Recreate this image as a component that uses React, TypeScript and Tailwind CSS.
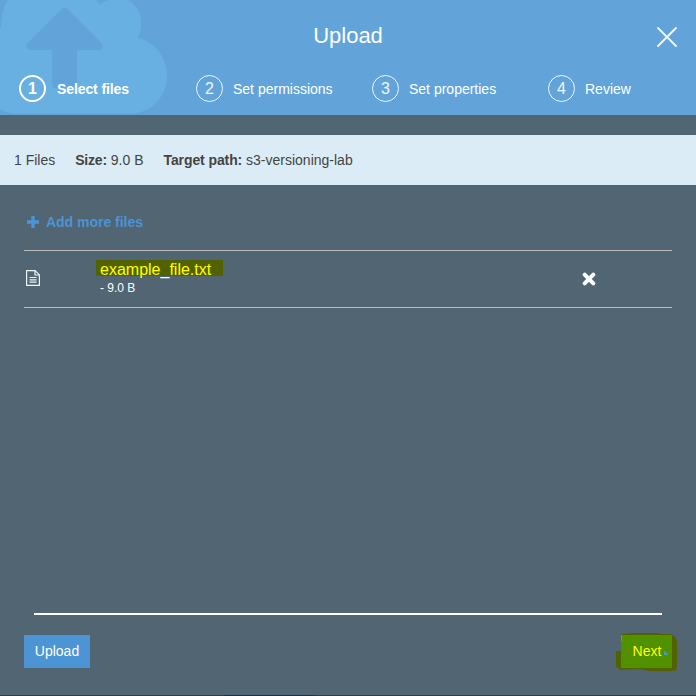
import React from "react";

const steps = ["Select files", "Set permissions", "Set properties", "Review"];

function CloudArt() {
  return (
    <svg className="absolute left-0 top-0" width="200" height="115" viewBox="0 0 200 115" aria-hidden="true">
      <path
        d="M1 28C1 18 3 8 8 0H96.500Q98.500 2 99.500 5C103 2 107 0 110 0H128C137 5 141 14 141 24C141 29 140 34 137.500 38C154 41 167 57 167 76C167 97 151 113.500 131 113.500H17C10 113.500 5 112 0 109V28Z"
        fill="#68b0e2"
      />
      <path
        d="M61.500 9Q64.500 6.500 67.500 9L102 43.500Q104 46 102.500 48Q101.500 50 99 50H77V84Q77 88 73 88H56Q52 88 52 84V50H30Q27.500 50 26.500 48Q25.500 46 27 43.500Z"
        fill="#62a4da"
      />
    </svg>
  );
}

function FileIcon() {
  return (
    <svg width="14" height="16" viewBox="0 0 14 16" fill="none" stroke="#fff" strokeOpacity=".92" strokeWidth="1.2">
      <path d="M.6.6H9.200L13.400 4.800V15.400H.6Z" strokeLinejoin="round" />
      <path d="M9 .8V5H13.200M3.500 7.500H10.500M3.500 9.800H10.500M3.500 12.200H10.500" />
    </svg>
  );
}

export default function App() {
  return (
    <div className="flex h-[696px] w-[696px] flex-col overflow-hidden bg-[#516572] font-['Liberation_Sans',Arial,sans-serif] text-sm text-white">
      <header className="relative h-[115px] shrink-0 bg-[#62a4da]">
        <CloudArt />
        <div className="relative grid h-[75px] grid-cols-[1fr_auto_1fr] items-center">
          <h1 className="col-start-2 pb-1 text-[22px] leading-[26px]">Upload</h1>
          <button className="mb-[2px] mr-[19px] justify-self-end" aria-label="Close">
            <svg className="block" width="20" height="20" viewBox="0 0 20 20" stroke="#fff" strokeOpacity=".92" strokeWidth="1.8" strokeLinecap="round">
              <path d="M1 1L19 19M19 1L1 19" />
            </svg>
          </button>
        </div>
        <ol className="relative flex pl-[19px]">
          {steps.map((step, i) => (
            <li key={step} className={`flex w-44 shrink-0 items-center ${i === 0 ? "mr-px font-bold" : ""}`}>
              <span className={`flex size-[27px] items-center justify-center rounded-full border-white text-base ${i === 0 ? "border-2" : "border border-white/90 text-white/90"}`}>
                {i + 1}
              </span>
              <span className={i === 0 ? "ml-[11px] tracking-[-0.1px]" : "ml-[10px]"}>{step}</span>
            </li>
          ))}
        </ol>
      </header>

      <section className="mt-5 flex h-[50px] shrink-0 items-center gap-5 bg-[#dcecf6] pl-[14px] text-[#444]">
        <span>1 Files</span>
        <span><b className="tracking-[-0.2px]">Size:</b> 9.0 B</span>
        <span><b className="tracking-[-0.1px]">Target path:</b> s3-versioning-lab</span>
      </section>

      <main className="flex flex-1 flex-col px-6 pt-[27px]">
        <button className="ml-[3px] flex h-5 items-center self-start font-bold text-[#4d94d5]">
          <svg className="mb-px mr-[7px]" width="12" height="12" viewBox="0 0 12 12" stroke="currentColor" strokeWidth="3.4">
            <path d="M6 0V12M0 6H12" />
          </svg>
          <span className="tracking-[-0.02px]">Add more files</span>
        </button>
        <div className="mt-[18px] flex h-[58px] border-y border-[#bbb]">
          <div className="flex w-[72px] items-center pb-[2px] pl-0.5"><FileIcon /></div>
          <div className="flex-1 pt-[9px]">
            <div className="flex h-4 w-[127px] items-center bg-[#536200] pl-1 text-base leading-[18px] text-[#ffff00]">
              <span className="pt-1">example<span className="text-white">_</span>file.txt</span>
            </div>
            <div className="pl-1 pt-[5px] text-xs leading-[15px]">- 9.0 B</div>
          </div>
          <button className="mr-[76px] self-center pb-px" aria-label="Remove">
            <svg className="block" width="14" height="14" viewBox="0 0 14 14" stroke="white" strokeWidth="4" strokeLinecap="round">
              <path d="M2.700 2.700L11.300 11.300M11.300 2.700L2.700 11.300" />
            </svg>
          </button>
        </div>
        <footer className="mt-auto">
          <div className="mx-[10px] h-0.5 bg-white" />
          <div className="mt-[17px] flex h-[63px] justify-between">
            <button className="mt-[3px] h-[33px] w-[66px] bg-[#4d94d5] pb-[2px]">Upload</button>
            <button className="relative -mr-[5px] h-[40px] w-[61px]">
              <svg className="absolute inset-0" width="61" height="40" viewBox="0 0 61 40">
                <path d="M5 2L17 1H43L45 2H55L58 4L61 8V34L60 38L57 39H32L30 38L21 37L5 38L0 35V19H5Z" fill="#536200" />
                <path d="M5 3H56V36H5Z" fill="#519100" />
                <path d="M5 3H6V9H5ZM48 19H49L52 22V23H48Z" fill="#4d94d5" />
              </svg>
              <span className="relative block pb-[3px] pl-px text-[#ffff00]">Next</span>
            </button>
          </div>
        </footer>
      </main>
      <div className="flex h-px shrink-0 bg-[#303c45] pl-[224px]"><div className="w-[91px] bg-[#1d3345]" /></div>
    </div>
  );
}
